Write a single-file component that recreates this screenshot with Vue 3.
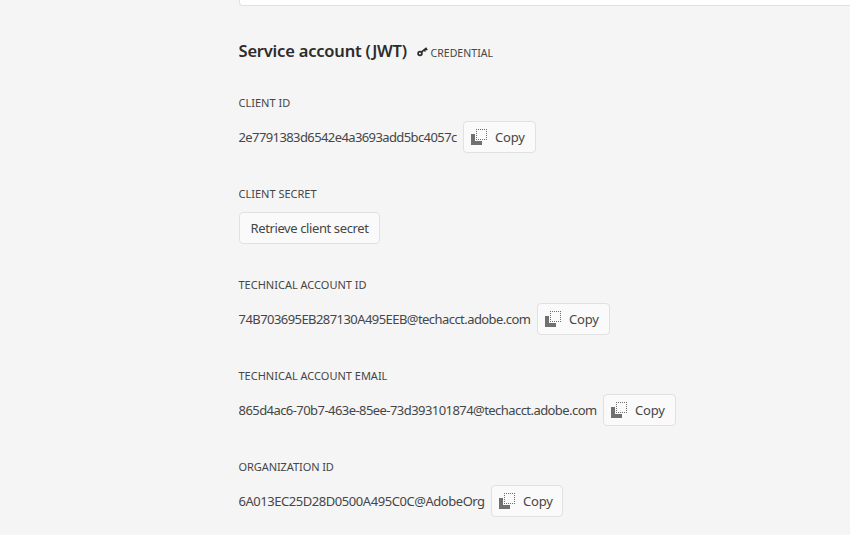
<script setup>
const fields = [
  { key: 'client', label: 'Client ID', value: '2e7791383d6542e4a3693add5bc4057c' },
  { key: 'secret', label: 'Client secret', action: 'Retrieve client secret' },
  { key: 'account', label: 'Technical account ID', value: '74B703695EB287130A495EEB@techacct.adobe.com' },
  { key: 'email', label: 'Technical account email', value: '865d4ac6-70b7-463e-85ee-73d393101874@techacct.adobe.com' },
  { key: 'org', label: 'Organization ID', value: '6A013EC25D28D0500A495C0C@AdobeOrg' },
]
</script>

<template>
  <main class="page">
    <div class="panel"></div>
    <header class="heading">
      <h2>Service account (JWT)</h2>
      <svg class="key" width="11" height="10" viewBox="0 0 11 10">
        <circle cx="3" cy="6.5" r="1.9" fill="none" stroke="#2c2c2c" stroke-width="1.7" />
        <path d="M4.3 5.2 9.6 1M7.2 2.7l1.3 1.7M8.8 1.3l1.4 1.8" fill="none" stroke="#2c2c2c" stroke-width="1.6" />
      </svg>
      <span class="badge">CREDENTIAL</span>
    </header>
    <section v-for="f in fields" :key="f.key" class="field" :class="f.key">
      <div class="label"><span>{{ f.label }}</span></div>
      <div class="row">
        <button v-if="f.action" class="btn retrieve"><span>{{ f.action }}</span></button>
        <template v-else>
          <span class="value">{{ f.value }}</span>
          <button class="btn copy">
            <svg width="18" height="18" viewBox="0 0 18 18" shape-rendering="crispEdges">
              <path d="M1 6h4v7h7v4H1z" fill="#707070" />
              <path d="M6 1.5h11M6 11.5h11M6.5 1v11M16.5 1v11" fill="none" stroke="#6e6e6e" stroke-dasharray="1 1" />
            </svg>
            <span>Copy</span>
          </button>
        </template>
      </div>
    </section>
  </main>
</template>

<style>
body {
  background: #f5f5f5;
}
</style>

<style scoped>
.page {
  box-sizing: border-box;
  height: 535px;
  overflow: hidden;
  padding-left: 238px;
  background: #f5f5f5;
  color: #464646;
  font-family: "Noto Sans", "Open Sans", sans-serif;
}
.panel {
  box-sizing: border-box;
  height: 6px;
  margin-left: 1px;
  background: #fff;
  border: 1px solid #e1e1e1;
  border-width: 0 0 1px 1px;
  border-radius: 0 0 0 4px;
}
.heading {
  display: flex;
  align-items: center;
  height: 24px;
  margin-top: 33px;
  margin-bottom: 30px;
  white-space: nowrap;
}
h2 {
  box-sizing: border-box;
  width: 178.5px;
  margin: 0;
  padding-left: 0.5px;
  padding-bottom: 1px;
  color: #2c2c2c;
  font-size: 16.5px;
  line-height: 24px;
  font-weight: 600;
  letter-spacing: -0.2px;
}
.key {
  margin-top: 2px;
}
.badge {
  margin: 4px 0 0 3px;
  font-size: 10.5px;
  line-height: 20px;
  letter-spacing: 0.05px;
}
.field {
  height: 91px;
}
.label {
  height: 20px;
  padding-left: 0.5px;
  font-size: 11px;
  line-height: 20px;
  text-transform: uppercase;
}
.org .label { letter-spacing: -0.08px; }
.row {
  display: flex;
  align-items: center;
  height: 32px;
  margin-top: 8px;
}
.value {
  flex: none;
  box-sizing: border-box;
  padding-left: 0.5px;
  font-size: 13px;
  line-height: 20px;
  white-space: nowrap;
}
.client .value { width: 225px; letter-spacing: -0.6px; }
.account .value { width: 299px; letter-spacing: -0.56px; }
.email .value { width: 365px; letter-spacing: -0.56px; }
.org .value { width: 253px; letter-spacing: -0.45px; }
.btn {
  display: flex;
  align-items: center;
  box-sizing: border-box;
  height: 32px;
  margin: 0;
  padding: 0;
  border: 1px solid #e1e1e1;
  border-radius: 4px;
  background: #fafafa;
  color: #464646;
  font: 13px/20px "Noto Sans", "Open Sans", sans-serif;
  white-space: nowrap;
}
.copy {
  width: 73px;
  padding-left: 6px;
  gap: 7px;
  letter-spacing: -0.2px;
}
.org .copy {
  width: 72px;
}
.retrieve {
  width: 141px;
  margin-left: 1px;
  padding-left: 10.5px;
  letter-spacing: -0.39px;
}
</style>
